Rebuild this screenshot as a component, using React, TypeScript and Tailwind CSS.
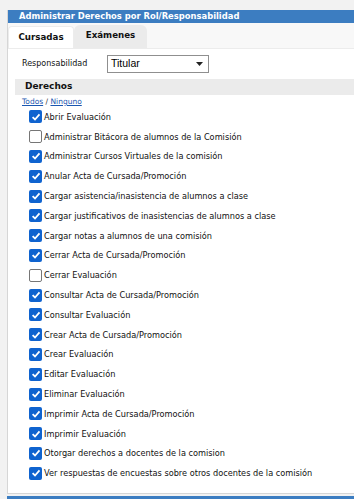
import React from 'react';

interface Derecho {
  label: string;
  checked: boolean;
}

const derechos: Derecho[] = [
  { label: 'Abrir Evaluación', checked: true },
  { label: 'Administrar Bitácora de alumnos de la Comisión', checked: false },
  { label: 'Administrar Cursos Virtuales de la comisión', checked: true },
  { label: 'Anular Acta de Cursada/Promoción', checked: true },
  { label: 'Cargar asistencia/inasistencia de alumnos a clase', checked: true },
  { label: 'Cargar justificativos de inasistencias de alumnos a clase', checked: true },
  { label: 'Cargar notas a alumnos de una comisión', checked: true },
  { label: 'Cerrar Acta de Cursada/Promoción', checked: true },
  { label: 'Cerrar Evaluación', checked: false },
  { label: 'Consultar Acta de Cursada/Promoción', checked: true },
  { label: 'Consultar Evaluación', checked: true },
  { label: 'Crear Acta de Cursada/Promoción', checked: true },
  { label: 'Crear Evaluación', checked: true },
  { label: 'Editar Evaluación', checked: true },
  { label: 'Eliminar Evaluación', checked: true },
  { label: 'Imprimir Acta de Cursada/Promoción', checked: true },
  { label: 'Imprimir Evaluación', checked: true },
  { label: 'Otorgar derechos a docentes de la comision', checked: true },
  { label: 'Ver respuestas de encuestas sobre otros docentes de la comisión', checked: true },
];

const Casilla: React.FC<{ checked: boolean }> = ({ checked }) =>
  checked ? (
    <span className="flex h-[13px] w-[13px] shrink-0 items-center justify-center rounded-[2px] bg-[#0f63cf]">
      <svg width="10" height="10" viewBox="0 0 10 10">
        <path d="M1.6 5.2 L4 7.5 L8.5 2.4" fill="none" stroke="#fff" strokeWidth="1.8" />
      </svg>
    </span>
  ) : (
    <span className="h-[13px] w-[13px] shrink-0 rounded-[2px] border border-[#767676] bg-white" />
  );

export default function App() {
  return (
    <div
      className="min-h-[499px] w-[354px] overflow-hidden bg-[#f2f2f2] pt-[10px] pl-[7px]"
      style={{ fontFamily: '"DejaVu Sans", Verdana, sans-serif' }}
    >
      <div className="border-l border-b border-[#d6d6d6] bg-white">
        <div className="flex h-[13px] items-center bg-[#3c7dc1] pl-[11px] text-[8.4px] font-bold text-white">
          Administrar Derechos por Rol/Responsabilidad
        </div>

        <div className="flex h-[26px] items-end border-b border-[#ececec] bg-[#f8f8f8]">
          <div className="flex h-[22px] w-[66px] items-center justify-center rounded-t-[4px] border border-b-0 border-[#ececec] bg-white pt-[1px] text-[8.7px] font-semibold text-[#111]">
            Cursadas
          </div>
          <div className="flex h-[23px] w-[73px] items-center justify-center rounded-t-[6px] bg-[#ebebeb] pb-[2px] text-[8.7px] font-bold text-[#111]">
            Exámenes
          </div>
        </div>

        <div className="flex h-[30px] items-center pl-[14px]">
          <span className="w-[85px] text-[8px] text-[#111]">Responsabilidad</span>
          <div
            className="flex h-[18px] w-[102px] items-center justify-between border border-[#8f8f8f] bg-white pl-[3px] pr-[5px] text-[10.5px] text-black"
            style={{ fontFamily: '"Liberation Sans", Arial, sans-serif' }}
          >
            <span>Titular</span>
            <svg width="7" height="4" viewBox="0 0 7 4">
              <path d="M0 0 L7 0 L3.5 4 Z" fill="#222" />
            </svg>
          </div>
        </div>

        <div className="ml-[7px] flex h-[16px] items-center bg-[#ebebeb] pl-[10px] text-[9px] font-bold text-[#111]">
          Derechos
        </div>

        <div className="pl-[14px] pt-[1px] text-[7.5px] leading-[11px] text-[#1a56b0]">
          <span className="underline">Todos</span>
          <span className="text-[#333]"> / </span>
          <span className="underline">Ninguno</span>
        </div>

        <ul className="pb-[10px] pl-[21px]">
          {derechos.map((d) => (
            <li key={d.label} className="flex h-[19.8px] items-center gap-[2px] text-[8.2px] text-[#111]">
              <Casilla checked={d.checked} />
              <span>{d.label}</span>
            </li>
          ))}
        </ul>
      </div>
      <div className="mt-[2px] h-[10px] bg-[#3c7dc1]" />
    </div>
  );
}
